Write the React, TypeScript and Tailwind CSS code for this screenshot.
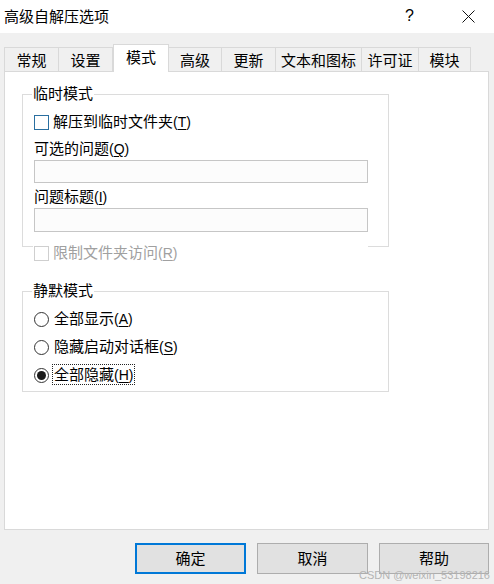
import React, { useState } from 'react';

const tabs = [
  { name: '常规', w: 'w-[55px]' },
  { name: '设置', w: 'w-[54px]' },
  { name: '模式', w: 'w-[56px]' },
  { name: '高级', w: 'w-[53px]' },
  { name: '更新', w: 'w-[54px]' },
  { name: '文本和图标', w: 'w-[86px]' },
  { name: '许可证', w: 'w-[57px]' },
  { name: '模块', w: 'w-[52px]' },
];

// 助记键 (T) など
const Mn = ({ k, dim }: { k: string; dim?: boolean }) => (
  <span className={`font-['Liberation_Sans'] text-[14px] ${dim ? 'text-[#a0a0a0]' : ''}`}>
    (<span className="underline underline-offset-2">{k}</span>)
  </span>
);

const GroupBox = ({ title, h, children }: { title: string; h: string; children: React.ReactNode }) => (
  <div className={`relative w-[367px] ${h} border border-[#dcdcdc] pl-[11px]`}>
    <span className="absolute left-[9px] top-[-12px] bg-white px-[1px] leading-[20px]">{title}</span>
    {children}
  </div>
);

const Radio = ({ checked }: { checked?: boolean }) => (
  <span className="w-[15px] h-[15px] rounded-full border border-[#333] bg-white flex items-center justify-center shrink-0">
    {checked && <span className="w-[9px] h-[9px] rounded-full bg-[#1a1a1a]" />}
  </span>
);

const App = () => {
  const [mode, setMode] = useState(2);
  const [tmp, setTmp] = useState(false);

  const radios = [
    { label: '全部显示', k: 'A' },
    { label: '隐藏启动对话框', k: 'S' },
    { label: '全部隐藏', k: 'H' },
  ];

  return (
    <div className="relative w-[494px] h-[584px] bg-[#f0f0f0] flex flex-col font-['Noto_Sans_CJK_SC','Liberation_Sans',sans-serif] text-[15px] text-black leading-[20px] overflow-hidden">
      {/* タイトルバー */}
      <div className="h-[33px] bg-white flex items-center pl-[4px] pb-[1px] shrink-0">
        <span>高级自解压选项</span>
        <div className="ml-auto flex items-center">
          <span className="font-['Liberation_Sans'] text-[16px]">?</span>
          <svg width="13" height="13" viewBox="0 0 13 13" className="ml-[48px] mr-[19px]">
            <path d="M0.5 0.5 L12.5 12.5 M12.5 0.5 L0.5 12.5" stroke="#111" strokeWidth="1" fill="none" />
          </svg>
        </div>
      </div>

      {/* タブ */}
      <div className="flex items-end pl-[4px] mt-[11px] -mb-px relative z-10">
        {tabs.map((t, i) =>
          i === 2 ? (
            <div
              key={t.name}
              className={`${t.w} h-[28px] bg-white border-l border-t border-r border-[#d9d9d9] flex items-center justify-center pb-[3px]`}
            >
              {t.name}
            </div>
          ) : (
            <div
              key={t.name}
              className={`${t.w} h-[25px] border-t border-r ${i === 0 ? 'border-l' : ''} ${i === 3 ? 'border-l-0' : ''} border-b border-[#d9d9d9] flex items-center justify-center pt-[1px]`}
            >
              {t.name}
            </div>
          )
        )}
      </div>

      {/* パネル */}
      <div className="ml-[4px] w-[485px] h-[459px] bg-white border border-[#d9d9d9] shrink-0">
        <div className="ml-[17px] mt-[22px]">
          <GroupBox title="临时模式" h="h-[153px]">
            <div
              className="mt-[17px] h-[20px] flex items-center gap-[4px] cursor-default"
              onClick={() => setTmp(!tmp)}
            >
              <span className="w-[15px] h-[15px] border border-[#2a6fa0] bg-white flex items-center justify-center">
                {tmp && (
                  <svg width="11" height="9" viewBox="0 0 11 9">
                    <path d="M1 4.5 L4 7.5 L10 1" stroke="#222" strokeWidth="1.3" fill="none" />
                  </svg>
                )}
              </span>
              <span className="-mt-[1px]">
                解压到临时文件夹<Mn k="T" />
              </span>
            </div>
            <div className="mt-[6px] h-[20px]">
              可选的问题<Mn k="Q" />
            </div>
            <div className="mt-[2px] w-[334px] h-[23px] border border-[#c6c6c6] bg-[#fcfcfc]" />
            <div className="mt-[3px] h-[20px]">
              问题标题<Mn k="I" />
            </div>
            <div className="mt-[2px] w-[334px] h-[24px] border border-[#c6c6c6] bg-[#fcfcfc]" />
          </GroupBox>
          <div className="relative -mt-[4px] ml-[11px] w-[335px] h-[20px] bg-white flex items-center gap-[4px] pl-[1px] text-[#a0a0a0]">
            <span className="w-[15px] h-[15px] border border-[#cfcfcf] bg-white" />
            <span className="-mt-[1px]">
              限制文件夹访问<Mn k="R" dim />
            </span>
          </div>

          <div className="mt-[28px]">
            <GroupBox title="静默模式" h="h-[101px]">
              <div className="mt-[17px] flex flex-col gap-[8px]">
                {radios.map((r, i) => (
                  <div
                    key={r.k}
                    className="h-[20px] flex items-center gap-[3px] cursor-default"
                    onClick={() => setMode(i)}
                  >
                    <Radio checked={mode === i} />
                    <span
                      className={`px-[1px] leading-[17px] -mt-[1px] border border-dotted ${
                        mode === i ? 'border-[#222]' : 'border-transparent'
                      }`}
                    >
                      {r.label}
                      <Mn k={r.k} />
                    </span>
                  </div>
                ))}
              </div>
            </GroupBox>
          </div>
        </div>
      </div>

      {/* ボタン */}
      <div className="flex mt-[13px] pl-[135px] gap-[11px]">
        <button className="w-[111px] h-[31px] bg-[#e1e1e1] border-2 border-[#0078d7] flex items-center justify-center pb-[1px]">
          确定
        </button>
        <button className="w-[111px] h-[31px] bg-[#e1e1e1] border border-[#adadad] flex items-center justify-center pb-[1px]">
          取消
        </button>
        <button className="w-[110px] h-[31px] bg-[#e1e1e1] border border-[#adadad] flex items-center justify-center pb-[1px]">
          帮助
        </button>
      </div>

      <span className="absolute right-[4px] bottom-[3px] font-['Liberation_Sans'] text-[11px] leading-[12px] text-[#b4b4b4]">
        CSDN @weixin_53198216
      </span>
    </div>
  );
};

export default App;
